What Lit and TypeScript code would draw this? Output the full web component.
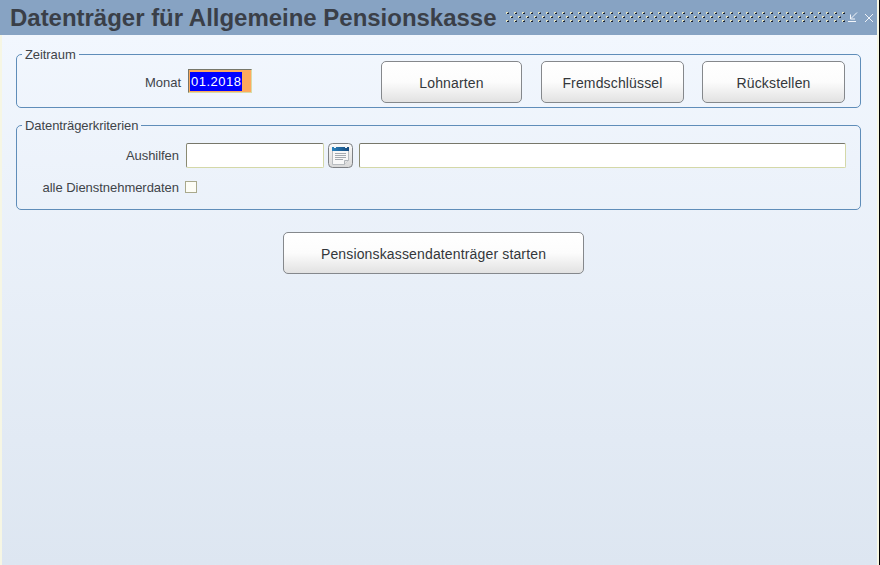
import { LitElement, html, css } from "lit";
import { customElement } from "lit/decorators.js";

@customElement("app-root")
export class AppRoot extends LitElement {
  static styles = css`
    :host {
      display: block;
      width: 880px;
      height: 565px;
      overflow: hidden;
      font-family: "Liberation Sans", Arial, sans-serif;
      color: #3f4449;
    }
    .frame {
      box-sizing: border-box;
      width: 880px;
      height: 565px;
      border-right: 1px solid #000;
    }
    .window {
      box-sizing: border-box;
      height: 565px;
      display: flex;
      flex-direction: column;
      border-right: 2px solid #f6f6e4;
      border-left: 2px solid #f6f6e4;
      background: linear-gradient(180deg, #f2f7fe 35px, #dde6f1 565px);
    }
    .title {
      height: 35px;
      margin-left: -2px;
      flex: none;
      background: #87a3c3;
      display: flex;
      align-items: center;
      padding: 0 3px 0 10px;
    }
    h1 {
      margin: 1px 0 0 0;
      font-size: 24px;
      font-weight: 700;
      letter-spacing: -0.02px;
      color: #3a3f48;
      white-space: nowrap;
    }
    .grip {
      flex: 1;
      display: block;
      height: 12px;
      min-width: 0;
      margin: 1px 2px 0 9px;
    }
    .ctrl {
      display: block;
      flex: none;
    }
    .close {
      margin-left: 6px;
    }
    .content {
      padding: 12px 16px 0 14px;
      display: flex;
      flex-direction: column;
    }
    fieldset {
      margin: 0;
      padding: 0;
      border: 1px solid #5f8db9;
      border-radius: 5px;
      min-width: 0;
    }
    legend {
      margin-left: 5px;
      padding: 2px 3px 0;
      font-size: 13px;
      line-height: 12px;
      letter-spacing: -0.08px;
      color: #3f4449;
    }
    .zeit {
      height: 61px;
      box-sizing: border-box;
    }
    .zeit-row {
      display: flex;
      align-items: flex-start;
      padding: 8px 15px 0 0;
      box-sizing: border-box;
    }
    .lbl {
      font-size: 13px;
      line-height: 15px;
      letter-spacing: -0.04px;
      text-align: right;
      white-space: nowrap;
    }
    .monat-lbl {
      width: 164px;
      padding-top: 6px;
    }
    .monat {
      box-sizing: border-box;
      margin-left: 7px;
      width: 64px;
      height: 24px;
      background: #fdaa5e;
      border: 1px solid;
      border-color: #77776a #d8dca8 #d8dca8 #77776a;
      padding: 2px 0 0 1px;
    }
    .sel {
      display: inline-block;
      vertical-align: top;
      background: #0000ff;
      color: #fff;
      font-size: 13px;
      line-height: 19px;
      letter-spacing: 0.5px;
      padding: 0 0 0 1px;
    }
    .btns {
      display: flex;
      margin-left: auto;
      gap: 18px;
      margin-top: -8px;
    }
    .btn {
      box-sizing: border-box;
      height: 42px;
      padding-top: 2px;
      border: 1px solid #85888c;
      border-radius: 5px;
      background: linear-gradient(180deg, #fff 0%, #fcfcfc 50%, #e2e2e2 100%);
      display: flex;
      align-items: center;
      justify-content: center;
      font-size: 14px;
      letter-spacing: 0.15px;
      color: #33373b;
      white-space: nowrap;
    }
    .b-lohn { width: 141px; margin-right: 1px; }
    .b-frem { width: 143px; }
    .b-ruck { width: 143px; }
    .b-start { width: 301px; }
    .crit {
      margin-top: 10px;
      height: 92px;
      box-sizing: border-box;
    }
    .row1 {
      display: flex;
      align-items: center;
      height: 25px;
      margin-top: 11px;
    }
    .w-lbl {
      width: 162px;
    }
    .inp {
      box-sizing: border-box;
      height: 25px;
      background: #fff;
      border: 1px solid;
      border-color: #77776a #d4d8a8 #d4d8a8 #8a8a72;
      border-radius: 2px;
      flex: none;
    }
    .i1 { width: 138px; margin-left: 7px; }
    .i2 { width: 487px; margin-left: 6px; }
    .cal {
      width: 25px;
      height: 25px;
      margin-left: 4px;
      flex: none;
      display: block;
    }
    .row2 {
      display: flex;
      align-items: center;
      height: 16px;
      margin-top: 11px;
    }
    .chk {
      box-sizing: border-box;
      width: 12px;
      height: 12px;
      margin-left: 6px;
      background: #fdfdf6;
      border: 1px solid #a9a98c;
      flex: none;
    }
    .start-wrap {
      display: flex;
      margin-top: 22px;
      padding-left: 267px;
    }
  `;

  render() {
    return html`
      <div class="frame">
        <div class="window">
          <div class="title">
            <h1>Datenträger für Allgemeine Pensionskasse</h1>
            <svg class="grip" height="12">
              <defs>
                <pattern id="dots" width="8" height="8" patternUnits="userSpaceOnUse">
                  <rect x="0" y="0" width="2" height="1" fill="#e4e4c4" />
                  <rect x="0" y="1" width="1" height="1" fill="#e4e4c4" />
                  <rect x="1" y="1" width="2" height="1" fill="#1a2230" />
                  <rect x="2" y="0" width="1" height="1" fill="#5d6a7c" />
                  <rect x="4" y="4" width="2" height="1" fill="#e4e4c4" />
                  <rect x="4" y="5" width="1" height="1" fill="#e4e4c4" />
                  <rect x="5" y="5" width="2" height="1" fill="#1a2230" />
                  <rect x="6" y="4" width="1" height="1" fill="#5d6a7c" />
                </pattern>
              </defs>
              <rect width="100%" height="12" fill="url(#dots)" />
            </svg>
            <svg class="ctrl" width="10" height="11" viewBox="0 0 10 11" fill="none" stroke="#f2f5fa" stroke-width="1">
              <path d="M0 9.500h8M9 0.500L3 6.500M2.500 2.500v4.500h4.500" />
            </svg>
            <svg class="ctrl close" width="10" height="10" viewBox="0 0 10 10" fill="none" stroke="#eef2f8" stroke-width="1">
              <path d="M1 1l8 8M9 1l-8 8" />
            </svg>
          </div>
          <div class="content">
            <fieldset class="zeit">
              <legend>Zeitraum</legend>
              <div class="zeit-row">
                <div class="lbl monat-lbl">Monat</div>
                <div class="monat"><span class="sel">01.2018</span></div>
                <div class="btns">
                  <div class="btn b-lohn">Lohnarten</div>
                  <div class="btn b-frem">Fremdschlüssel</div>
                  <div class="btn b-ruck">Rückstellen</div>
                </div>
              </div>
            </fieldset>
            <fieldset class="crit">
              <legend>Datenträgerkriterien</legend>
              <div class="row1">
                <div class="lbl w-lbl">Aushilfen</div>
                <div class="inp i1"></div>
                <svg class="cal" viewBox="0 0 25 25">
                  <defs>
                    <linearGradient id="b" x1="0" y1="0" x2="0" y2="1">
                      <stop offset="0" stop-color="#fbfbfb" /><stop offset="1" stop-color="#d8d8d8" />
                    </linearGradient>
                    <linearGradient id="h" x1="0" y1="0" x2="1" y2="0">
                      <stop offset="0" stop-color="#2a82bd" /><stop offset="1" stop-color="#164a7e" />
                    </linearGradient>
                  </defs>
                  <rect x="0.500" y="0.500" width="24" height="24" rx="4" fill="url(#b)" stroke="#7d8084" />
                  <path d="M4.500 7.500h16v10l-4 4h-12z" fill="#f8f8f8" stroke="#b8bcc0" />
                  <path d="M16.500 21.500v-4h4" fill="#e4e4e4" stroke="#b0b4b8" />
                  <rect x="4" y="4" width="17" height="4" fill="url(#h)" />
                  <rect x="6" y="3" width="2" height="2" fill="#f0f4f8" />
                  <rect x="17" y="3" width="2" height="2" fill="#f0f4f8" />
                  <path d="M7 10.500h11M7 12.500h11M7 14.500h11M7 16.500h8" stroke="#a4aab0" />
                </svg>
                <div class="inp i2"></div>
              </div>
              <div class="row2">
                <div class="lbl w-lbl">alle Dienstnehmerdaten</div>
                <div class="chk"></div>
              </div>
            </fieldset>
            <div class="start-wrap">
              <div class="btn b-start">Pensionskassendatenträger starten</div>
            </div>
          </div>
        </div>
      </div>
    `;
  }
}
